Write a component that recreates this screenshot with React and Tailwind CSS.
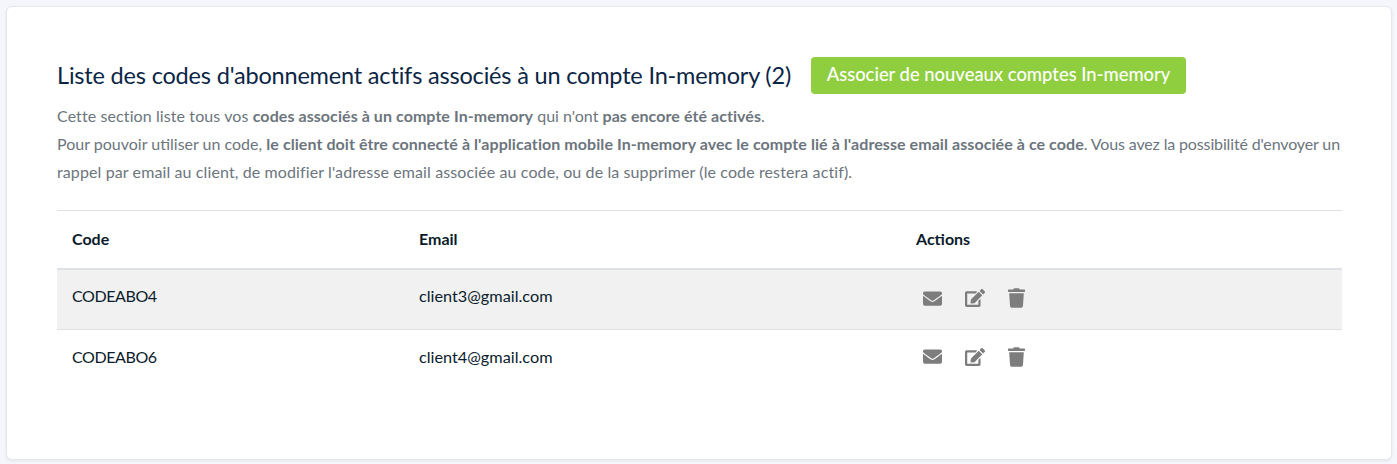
import React from "react";
import { FaEnvelope, FaEdit, FaTrash } from "react-icons/fa";

const rows = [
  { code: "CODEABO4", email: "client3@gmail.com" },
  { code: "CODEABO6", email: "client4@gmail.com" },
];

const App = () => {
  return (
    <div className="h-[464px] bg-[#f4f6fb] pt-[6px] pl-[6px] pr-[5px] font-['Lato',sans-serif] overflow-hidden">
      <div className="h-[454px] bg-white rounded-[6px] border border-[#e4e7ec] shadow-[0_1px_3px_rgba(0,0,0,0.08)] pt-[49px] pl-[50px] pr-[49px]">
        <div className="flex items-center h-[38px]">
          <h2 className="w-[734px] text-[23.5px] leading-[38px] text-[#0b2545] tracking-[-0.18px] whitespace-nowrap">
            Liste des codes d'abonnement actifs associés à un compte In-memory (2)
          </h2>
          <button className="ml-[20px] h-[37px] w-[375px] bg-[#8fce3f] text-white text-[18.4px] font-medium rounded-[4px] whitespace-nowrap">
            Associer de nouveaux comptes In-memory
          </button>
        </div>

        <div className="mt-[8px] text-[16px] leading-[28px] text-[#6c757d]">
          <p>
            <span className="tracking-[0.1px]">Cette section liste tous vos </span>
            <b className="tracking-[0.07px]">codes associés à un compte In-memory</b> qui n'ont{" "}
            <b className="tracking-[0.07px]">pas encore été activés</b>.
          </p>
          <p>
            Pour pouvoir utiliser un code,{" "}
            <b className="tracking-[0.07px]">le client doit être connecté à l'application mobile In-memory avec le compte lié à l'adresse email associée à ce code</b>
            <span className="tracking-[-0.14px]">. Vous avez la possibilité d'envoyer un </span>
            <span className="tracking-[0.11px]">rappel par email au client, de modifier l'adresse email associée au code, ou de la supprimer (le code restera actif).</span>
          </p>
        </div>

        <table className="mt-[24px] w-full border-collapse text-[16px] text-[#0b1b2b]">
          <thead>
            <tr className="h-[58px] border-t border-[#dee2e6] border-b-2 border-b-[#dee2e6] text-left">
              <th className="pl-[15px] w-[346px] font-bold">Code</th>
              <th className="pl-[16px] w-[497px] font-bold">Email</th>
              <th className="pl-[16px] font-bold">Actions</th>
            </tr>
          </thead>
          <tbody>
            {rows.map((row, i) => (
              <tr
                key={row.code}
                className={`border-b border-[#dee2e6] last:border-b-0 ${i === 0 ? "bg-[#f1f1f1] h-[61px]" : "h-[54px]"}`}
              >
                <td className={`pl-[15px] tracking-[-0.4px] ${i === 0 ? "pb-[6px]" : ""}`}>{row.code}</td>
                <td className={`pl-[16px] text-[16.25px] ${i === 0 ? "pb-[6px]" : ""}`}>{row.email}</td>
                <td className={`pl-[23px] ${i === 0 ? "pb-[2px]" : ""}`}>
                  <div className="flex items-center gap-[23px] text-[#7d7d7d]">
                    <FaEnvelope className="w-[19px] h-[19px]" />
                    <FaEdit className="w-[20px] h-[20px]" />
                    <FaTrash className="w-[17px] h-[20px]" />
                  </div>
                </td>
              </tr>
            ))}
          </tbody>
        </table>
      </div>
    </div>
  );
};

export default App;
